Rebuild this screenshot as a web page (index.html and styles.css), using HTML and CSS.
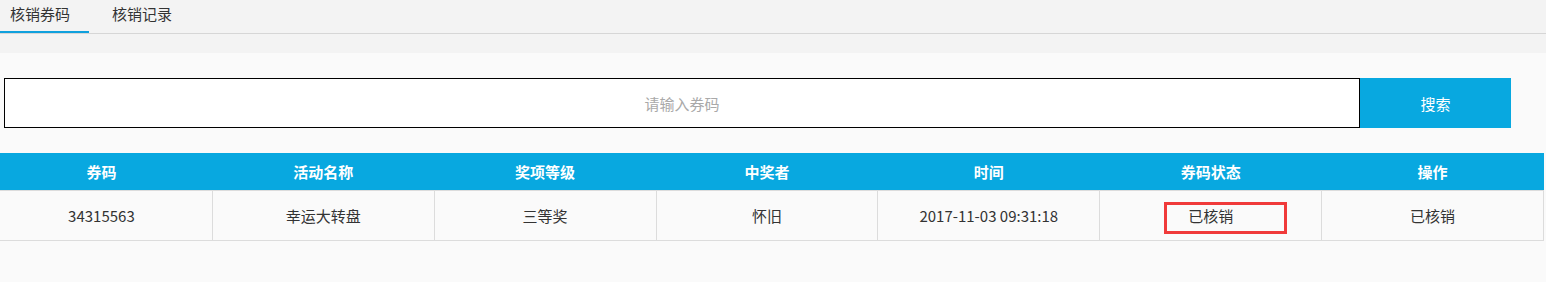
FILE: index.html
```html
<!DOCTYPE html>
<html lang="zh-CN">
<head>
<meta charset="utf-8">
<title>核销券码</title>
<link rel="stylesheet" href="styles.css">
</head>
<body>
<div class="top">
  <div class="tabs">
    <div class="tab active">核销券码</div>
    <div class="tab second">核销记录</div>
  </div>
</div>
<div class="content">
  <div class="search">
    <input class="search-input" type="text" placeholder="请输入券码">
    <button class="search-btn">搜索</button>
  </div>
  <table class="grid">
    <thead>
      <tr>
        <th>券码</th>
        <th>活动名称</th>
        <th>奖项等级</th>
        <th>中奖者</th>
        <th>时间</th>
        <th>券码状态</th>
        <th>操作</th>
      </tr>
    </thead>
    <tbody>
      <tr>
        <td>34315563</td>
        <td>幸运大转盘</td>
        <td>三等奖</td>
        <td>怀旧</td>
        <td>2017-11-03 09:31:18</td>
        <td class="status">已核销<span class="mark"></span></td>
        <td>已核销</td>
      </tr>
    </tbody>
  </table>
</div>
</body>
</html>
```

FILE: styles.css
```css
html, body {
  margin: 0;
  padding: 0;
}
body {
  background: #fafafa;
  font-family: "Microsoft YaHei", "Noto Sans CJK SC", "Liberation Sans", sans-serif;
  font-size: 15px;
  color: #333;
  overflow: hidden;
}
.top {
  background: #f3f3f3;
  padding-bottom: 19px;
}
.tabs {
  display: flex;
  border-bottom: 1px solid #d6d6d6;
  height: 33px;
}
.tab {
  box-sizing: border-box;
  height: 33px;
  line-height: 28px;
  padding: 0 19px 0 10px;
  color: #333;
  border-bottom: 2px solid transparent;
}
.tab.active {
  border-bottom-color: #0fa0dd;
}
.tab.second {
  margin-left: 13px;
}
.content {
  padding-top: 25px;
}
.search {
  display: flex;
  margin-left: 4px;
  height: 50px;
}
.search-input {
  box-sizing: border-box;
  width: 1356px;
  height: 50px;
  border: 1px solid #000;
  background: #fff;
  text-align: center;
  font-family: inherit;
  font-size: 15px;
  outline: none;
  margin: 0;
  padding: 0;
}
.search-input::placeholder {
  color: #a9a9a9;
}
.search-btn {
  width: 151px;
  height: 50px;
  border: none;
  margin: 0;
  background: #08a8e0;
  color: #fff;
  font-family: inherit;
  font-size: 15px;
  padding: 0;
}
.grid {
  margin-top: 25px;
  margin-left: -10px;
  width: 1554px;
  table-layout: fixed;
  border-collapse: collapse;
}
.grid th {
  background: #08a8e0;
  color: #fff;
  font-weight: bold;
  height: 37px;
  padding: 0;
  text-align: center;
}
.grid td {
  height: 49px;
  padding: 0;
  border: 1px solid #dcdcdc;
  text-align: center;
  color: #333;
}
.status {
  position: relative;
}
.mark {
  position: absolute;
  left: 64px;
  top: 11px;
  width: 117px;
  height: 26px;
  border: 3px solid #f03a3a;
}
```
